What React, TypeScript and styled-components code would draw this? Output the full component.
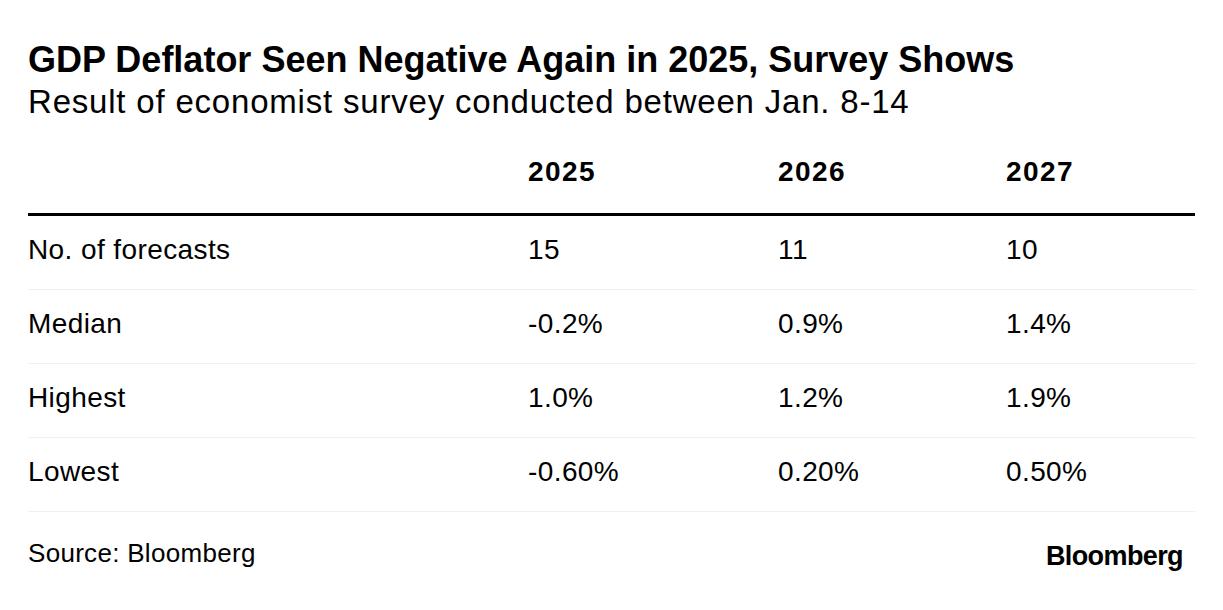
import styled, { createGlobalStyle } from 'styled-components';

const rows = [
  { label: 'No. of forecasts', values: ['15', '11', '10'] },
  { label: 'Median', values: ['-0.2%', '0.9%', '1.4%'] },
  { label: 'Highest', values: ['1.0%', '1.2%', '1.9%'] },
  { label: 'Lowest', values: ['-0.60%', '0.20%', '0.50%'] },
];

const years = ['2025', '2026', '2027'];

export default function App() {
  return (
    <>
      <GlobalStyle />
      <Page>
        <Title>GDP Deflator Seen Negative Again in 2025, Survey Shows</Title>
        <Subtitle>Result of economist survey conducted between Jan. 8-14</Subtitle>

        <Table>
          <HeadRow>
            <span />
            {years.map((y) => (
              <HeadCell key={y}>{y}</HeadCell>
            ))}
          </HeadRow>

          {rows.map((r) => (
            <Row key={r.label}>
              <Cell>{r.label}</Cell>
              {r.values.map((v, i) => (
                <Cell key={i}>{v}</Cell>
              ))}
            </Row>
          ))}
        </Table>

        <Footer>
          <Source>Source: Bloomberg</Source>
          <Logo>Bloomberg</Logo>
        </Footer>
      </Page>
    </>
  );
}

const GlobalStyle = createGlobalStyle`
  html, body {
    margin: 0;
    padding: 0;
    background: #fff;
  }
  body {
    font-family: "Liberation Sans", Arial, sans-serif;
    color: #000;
  }
`;

const Page = styled.div`
  width: 1223px;
  height: 610px;
  box-sizing: border-box;
  padding: 40px 28px 0 28px;
`;

const Title = styled.h1`
  margin: 0;
  font-size: 36px;
  line-height: 40px;
  font-weight: 700;
`;

const Subtitle = styled.p`
  margin: 3px 0 0;
  font-size: 33px;
  line-height: 38px;
  font-weight: 400;
  letter-spacing: 0.8px;
`;

const Table = styled.div`
  margin-top: 37px;
  display: flex;
  flex-direction: column;
`;

const grid = `
  display: grid;
  grid-template-columns: 500px 250px 228px 1fr;
`;

const HeadRow = styled.div`
  ${grid}
  height: 55px;
  border-bottom: 3px solid #000;
  align-items: start;
`;

const HeadCell = styled.span`
  font-size: 28px;
  line-height: 28px;
  font-weight: 700;
  letter-spacing: 1.4px;
`;

const Row = styled.div`
  ${grid}
  height: 74px;
  box-sizing: border-box;
  align-items: center;
  padding-bottom: 5px;
  border-bottom: 1px solid #f0f0f0;
`;

const Cell = styled.span`
  font-size: 28px;
  line-height: 30px;
  letter-spacing: 0.4px;
`;

const Footer = styled.div`
  display: flex;
  justify-content: space-between;
  align-items: flex-start;
  margin-top: 26px;
  padding-right: 12px;
`;

const Source = styled.span`
  font-size: 26px;
  line-height: 30px;
  letter-spacing: 0.3px;
`;

const Logo = styled.span`
  margin-top: 3px;
  font-size: 27px;
  line-height: 30px;
  font-weight: 700;
  letter-spacing: -0.6px;
`;
